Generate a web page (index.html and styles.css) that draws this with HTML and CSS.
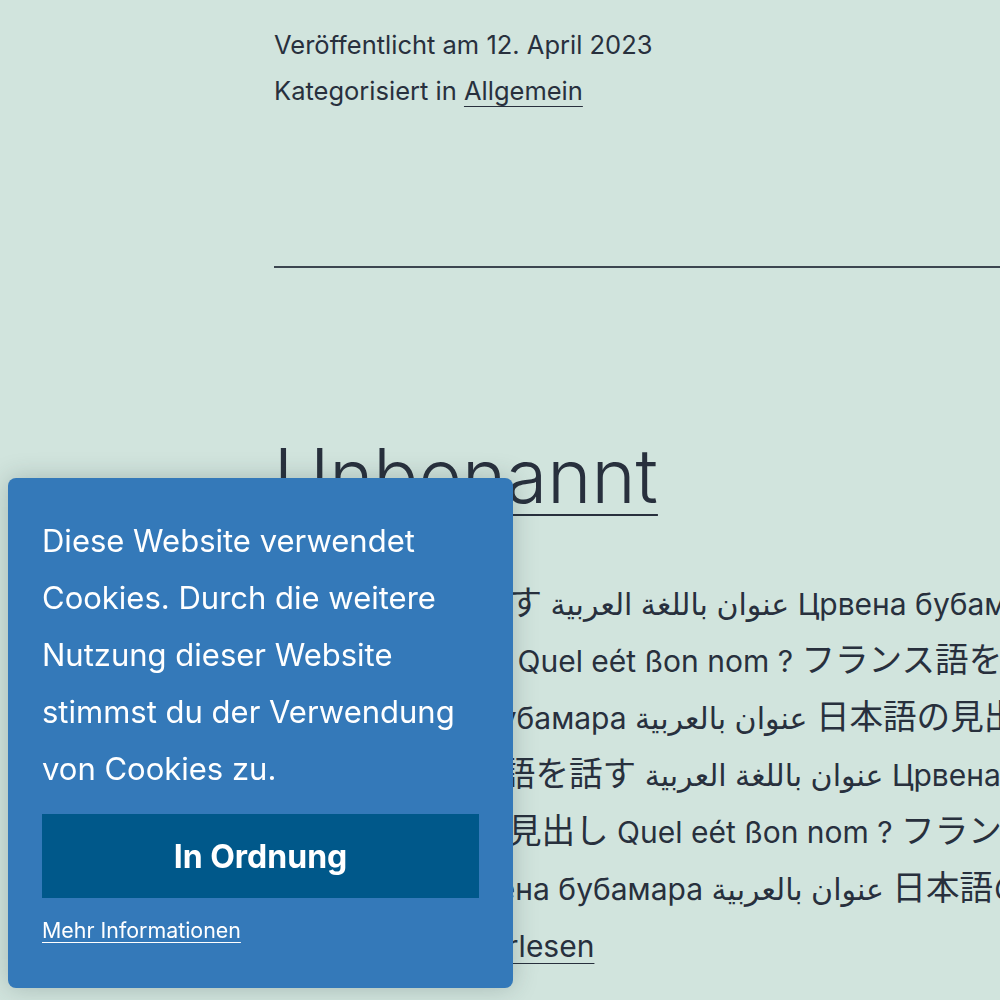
FILE: index.html
```html
<!DOCTYPE html>
<html lang="de">
<head>
<meta charset="utf-8">
<title>Unbenannt</title>
<link rel="stylesheet" href="styles.css">
</head>
<body>
<main class="site">
  <footer class="entry-meta">
    <div class="meta-line">Veröffentlicht am 12. April 2023</div>
    <div class="meta-line">Kategorisiert in <a href="#">Allgemein</a></div>
  </footer>
  <hr class="separator">
  <article class="entry">
    <h2 class="entry-title"><a href="#">Unbenannt</a></h2>
    <p class="excerpt">
      <span class="line"><span class="ja" lang="ja">フランス語を話す</span> عنوان باللغة العربية Црвена бубамара عنوان بالعربية <span class="ja" lang="ja">日本語の見出し</span></span>
      <span class="line"><span class="ja" lang="ja">日本語の見出し</span> Quel eét ßon nom ? <span class="ja" lang="ja">フランス語を話す</span> عنوان باللغة العربية</span>
      <span class="line">العربية Црвена бубамара عنوان بالعربية <span class="ja" lang="ja">日本語の見出し</span> Quel eét ßon nom ?</span>
      <span class="line">nom ? <span class="ja" lang="ja">フランス語を話す</span> عنوان باللغة العربية Црвена бубамара عنوان بالعربية</span>
      <span class="line">بالعربية <span class="ja" lang="ja">日本語の見出し</span> Quel eét ßon nom ? <span class="ja" lang="ja">フランス語を話す</span> عنوان باللغة</span>
      <span class="line">om ? العربية Црвена бубамара عنوان بالعربية <span class="ja" lang="ja">日本語の見出し</span> Quel eét ßon nom ?</span>
      <span class="line">Quel eét… <a href="#">Weiterlesen</a></span>
    </p>
  </article>
</main>
<aside class="cookie">
  <p class="cookie-text">Diese Website verwendet Cookies. Durch die weitere Nutzung dieser Website stimmst du der Verwendung von Cookies zu.</p>
  <button class="cookie-btn" type="button">In Ordnung</button>
  <a class="cookie-more" href="#">Mehr Informationen</a>
</aside>
</body>
</html>
```
FILE: styles.css
```css
html, body {
  margin: 0;
  padding: 0;
}
body {
  background: #d1e4dd;
  color: #28303d;
  font-family: Inter, "Noto Sans CJK JP", "DejaVu Sans", sans-serif;
  height: 1000px;
  overflow: hidden;
}
a {
  color: inherit;
  text-decoration: underline;
  text-decoration-thickness: 1px;
  text-underline-offset: 6px;
}
.site {
  width: 1400px;
  padding: 22px 0 0 274px;
}
.entry-meta {
  font-size: 25.5px;
  line-height: 46px;
}
.separator {
  margin: 152px 0 0;
  border: 0;
  height: 2px;
  background: #3c4650;
}
.entry-title {
  margin: 156px 0 0;
  font-size: 75px;
  font-weight: 300;
  line-height: 104px;
}
.entry-title a {
  text-decoration-thickness: 2px;
  text-underline-offset: 11px;
}
.excerpt {
  margin: 48px 0 0;
  font-size: 30px;
  line-height: 57px;
}
.line {
  display: block;
  height: 57px;
  white-space: nowrap;
}
.ja {
  font-family: "Noto Sans CJK JP", sans-serif;
  font-size: 1.12em;
  line-height: 1;
}
.excerpt a {
  text-underline-offset: 6px;
}
.cookie {
  position: fixed;
  left: 8px;
  bottom: 12px;
  width: 505px;
  box-sizing: border-box;
  padding: 34px 34px 42px;
  background: #3479b9;
  color: #fff;
  border-radius: 8px;
  box-shadow: 0 0 24px rgba(40, 60, 60, 0.25);
}
.cookie-text {
  margin: 0 0 17px;
  font-size: 31px;
  line-height: 57px;
}
.cookie-btn {
  display: block;
  width: 100%;
  height: 84px;
  margin: 0;
  border: 0;
  background: #00588a;
  color: #fff;
  font-family: inherit;
  font-size: 32px;
  font-weight: 700;
}
.cookie-more {
  display: inline-block;
  margin-top: 17px;
  font-size: 21.4px;
  line-height: 31px;
  text-underline-offset: 4px;
}
```
